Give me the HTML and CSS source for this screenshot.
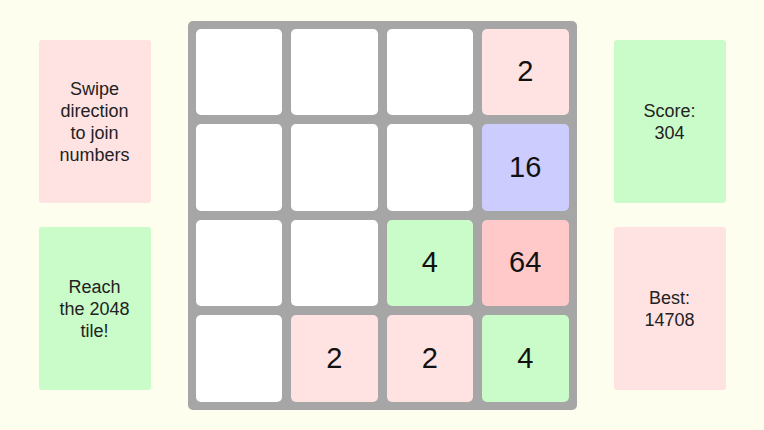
FILE: index.html
```html
<!DOCTYPE html>
<html lang="en">
<head>
    <meta charset="UTF-8">
    <meta name="viewport" content="width=device-width, initial-scale=1.0">
    <title>2048</title>
    <link rel="stylesheet" href="styles.css">
</head>
<body>

<div class="game">
    <!-- Kolom kiri: petunjuk -->
    <div class="side">
        <div class="card pink">Swipe<br>direction<br>to join<br>numbers</div>
        <div class="card green">Reach<br>the 2048<br>tile!</div>
    </div>

    <!-- Papan permainan -->
    <div class="board">
        <div class="tile"></div>
        <div class="tile"></div>
        <div class="tile"></div>
        <div class="tile t2">2</div>

        <div class="tile"></div>
        <div class="tile"></div>
        <div class="tile"></div>
        <div class="tile t16">16</div>

        <div class="tile"></div>
        <div class="tile"></div>
        <div class="tile t4">4</div>
        <div class="tile t64">64</div>

        <div class="tile"></div>
        <div class="tile t2">2</div>
        <div class="tile t2">2</div>
        <div class="tile t4">4</div>
    </div>

    <!-- Kolom kanan: skor -->
    <div class="side">
        <div class="card green">Score:<br>304</div>
        <div class="card pink">Best:<br>14708</div>
    </div>
</div>

</body>
</html>
```

FILE: styles.css
```css
/* Halaman */
body {
    margin: 0;
    background-color: #fefeee;
    font-family: "Liberation Sans", Arial, sans-serif;
    color: #222;
}

.game {
    height: 430px;
    display: flex;
    align-items: center;
    justify-content: center;
    gap: 37px;
}

/* Kartu di samping papan */
.side {
    display: flex;
    flex-direction: column;
    gap: 24px;
}

.card {
    width: 112px;
    height: 163px;
    display: flex;
    align-items: center;
    justify-content: center;
    text-align: center;
    font-size: 18px;
    line-height: 22px;
    border-radius: 3px;
}

.pink {
    background-color: #ffe2e2;
}

.green {
    background-color: #c9fcc9;
}

/* Papan */
.board {
    width: 389px;
    height: 389px;
    box-sizing: border-box;
    padding: 8px;
    display: grid;
    grid-template-columns: repeat(4, 1fr);
    grid-template-rows: repeat(4, 1fr);
    gap: 9px;
    background-color: #a6a6a6;
    border-radius: 5px;
}

.tile {
    background-color: #ffffff;
    border-radius: 5px;
    display: flex;
    align-items: center;
    justify-content: center;
    font-size: 29px;
    color: #111;
}

.t2 {
    background-color: #ffe2e2;
}

.t4 {
    background-color: #c9fcc9;
}

.t16 {
    background-color: #ccccff;
}

.t64 {
    background-color: #ffc9c9;
}
```
